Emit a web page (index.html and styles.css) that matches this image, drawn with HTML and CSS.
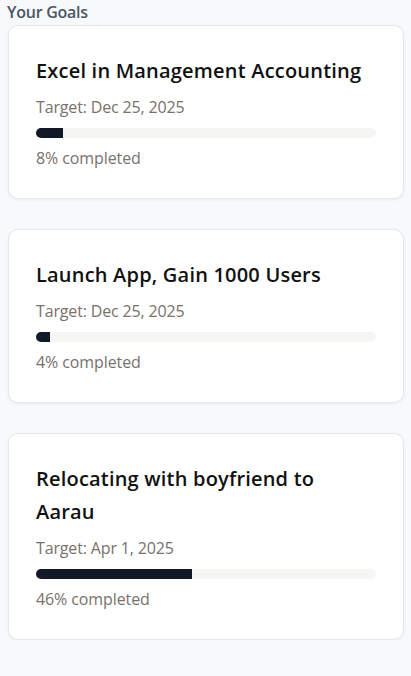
FILE: index.html
```html
<!DOCTYPE html>
<html lang="en">
<head>
<meta charset="utf-8">
<title>Your Goals</title>
<link rel="stylesheet" href="styles.css">
</head>
<body>
<main class="goals">
  <h2 class="goals-title">Your Goals</h2>
  <div class="goal-list">
    <section class="card">
      <h3 class="card-title">Excel in Management Accounting</h3>
      <p class="card-target">Target: Dec 25, 2025</p>
      <div class="bar"><div class="bar-fill" style="width:8%"></div></div>
      <p class="card-progress">8% completed</p>
    </section>
    <section class="card">
      <h3 class="card-title">Launch App, Gain 1000 Users</h3>
      <p class="card-target">Target: Dec 25, 2025</p>
      <div class="bar"><div class="bar-fill" style="width:4%"></div></div>
      <p class="card-progress">4% completed</p>
    </section>
    <section class="card">
      <h3 class="card-title">Relocating with boyfriend to Aarau</h3>
      <p class="card-target">Target: Apr 1, 2025</p>
      <div class="bar"><div class="bar-fill" style="width:46%"></div></div>
      <p class="card-progress">46% completed</p>
    </section>
  </div>
</main>
</body>
</html>
```

FILE: styles.css
```css
* { box-sizing: border-box; }
html, body { margin: 0; padding: 0; }
body {
  background: #f8f9fb;
  font-family: "Open Sans", "Noto Sans", sans-serif;
  color: #111;
}
.goals { padding: 0 7px 0 8px; }
.goals-title {
  margin: 0 0 0 -1px;
  font-size: 16px;
  font-weight: 600;
  line-height: 24px;
  letter-spacing: -0.25px;
  color: #4b5563;
}
.goal-list {
  display: flex;
  flex-direction: column;
  gap: 30px;
  margin-top: 1px;
}
.card {
  background: #fff;
  border: 1px solid #e5e7eb;
  border-radius: 10px;
  box-shadow: 0 1px 3px rgba(0,0,0,0.06);
  padding: 28px 27px 28px 27px;
}
.card-title {
  margin: 0;
  font-size: 20px;
  font-weight: 600;
  line-height: 33px;
  letter-spacing: 0.2px;
  color: #111;
}
.card-target {
  margin: 8px 0 0;
  font-size: 16px;
  line-height: 24px;
  letter-spacing: -0.15px;
  color: #78716c;
}
.bar {
  margin-top: 9px;
  height: 10px;
  background: #f5f5f4;
  border-radius: 999px;
  overflow: hidden;
}
.bar-fill {
  height: 100%;
  background: #111827;
}
.card-progress {
  margin: 8px 0 0;
  font-size: 16px;
  line-height: 24px;
  letter-spacing: -0.1px;
  color: #78716c;
}
```
